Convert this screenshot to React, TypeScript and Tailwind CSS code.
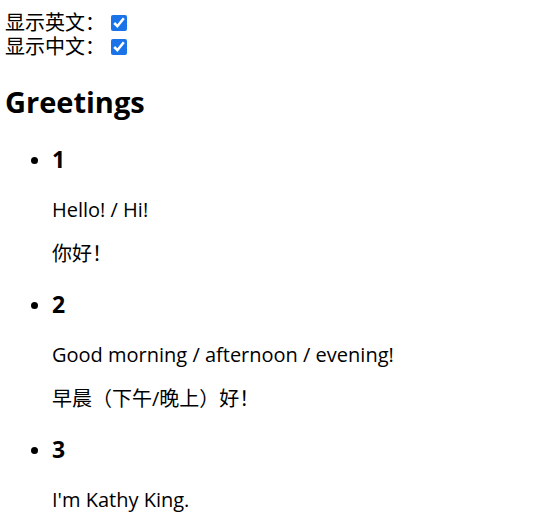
import React from "react";

const GREETINGS = [
  { id: 1, en: "Hello! / Hi!", zh: "你好！" },
  { id: 2, en: "Good morning / afternoon / evening!", zh: "早晨（下午/晚上）好！" },
  { id: 3, en: "I'm Kathy King.", zh: "我是凯西·金。" },
];

export default function App() {
  return (
    <div className="min-h-screen bg-white px-[5px] pt-[11px] text-[20px] text-black font-['Open_Sans','Noto_Sans_CJK_SC',sans-serif]">
      {/* toggles */}
      <div className="flex items-center h-[24px] leading-[22px]">
        <span>显示英文：</span>
        <input type="checkbox" defaultChecked className="w-4 h-4 ml-[6px] accent-[#1a73e8]" />
      </div>
      <div className="flex items-center h-[24px] leading-[22px]">
        <span>显示中文：</span>
        <input type="checkbox" defaultChecked className="w-4 h-4 ml-[6px] accent-[#1a73e8]" />
      </div>

      <h2 className="mt-[25px] mb-[24px] text-[29px] leading-[36px] font-bold">Greetings</h2>

      <ul className="list-disc pl-[47px]">
        {GREETINGS.map(g => (
          <li key={g.id}>
            <h3 className="mb-[23px] text-[23px] leading-[30px] font-bold">{g.id}</h3>
            <p className="mb-[18px] leading-[26px]">{g.en}</p>
            <p className="mb-[22px] leading-[26px]">{g.zh}</p>
          </li>
        ))}
      </ul>
    </div>
  );
}
